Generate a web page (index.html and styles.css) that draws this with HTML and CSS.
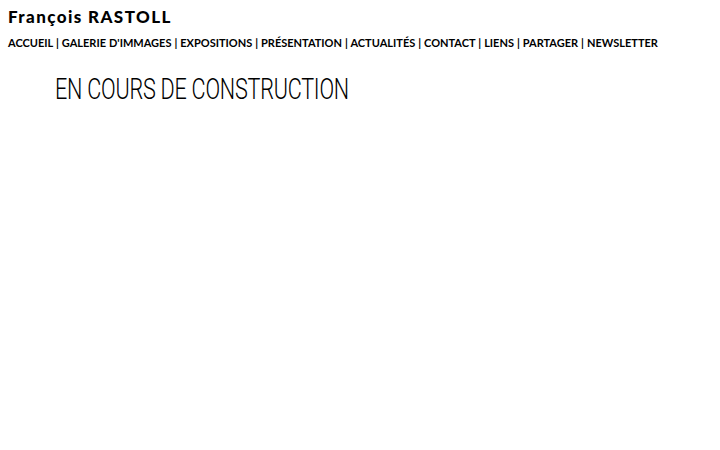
FILE: index.html
```html
<!DOCTYPE html>
<html lang="fr">
<head>
<meta charset="utf-8">
<title>François RASTOLL</title>
<link rel="stylesheet" href="styles.css">
</head>
<body>
<header class="site-header">
  <h1 class="site-title">François RASTOLL</h1>
  <nav class="site-nav">ACCUEIL | GALERIE D'IMMAGES | EXPOSITIONS | PRÉSENTATION | ACTUALITÉS | CONTACT | LIENS | PARTAGER | NEWSLETTER</nav>
</header>
<main class="content">
  <h2 class="notice">EN COURS DE CONSTRUCTION</h2>
</main>
</body>
</html>
```
FILE: styles.css
```css
html, body { margin: 0; padding: 0; background: #fff; }
body { color: #000; font-family: "Lato", "DejaVu Sans", sans-serif; }
.site-header { padding: 7px 0 0 8px; }
.site-title {
  margin: 0;
  font-family: "Lato", sans-serif;
  font-weight: 900;
  font-size: 17px;
  letter-spacing: 1.4px;
  line-height: 20px;
}
.site-nav {
  margin-top: 9px;
  font-family: "Lato", sans-serif;
  font-weight: 700;
  font-size: 11px;
  letter-spacing: 0;
  word-spacing: 0.3px;
  line-height: 14px;
  white-space: nowrap;
}
.content { padding: 23px 0 0 55px; }
.notice {
  display: inline-block;
  margin: 0;
  font-family: "Roboto", sans-serif;
  font-weight: 300;
  font-size: 29px;
  line-height: 32px;
  letter-spacing: -0.3px;
  transform: scaleX(0.745);
  transform-origin: left center;
  white-space: nowrap;
}
```
